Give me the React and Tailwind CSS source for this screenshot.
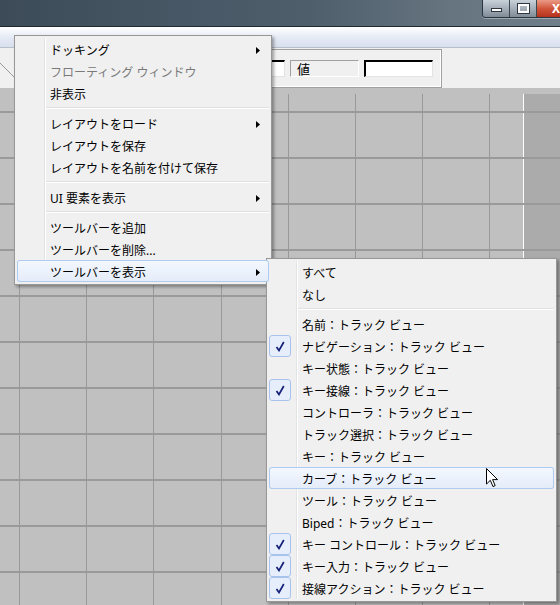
import clsx from 'clsx'

const mainMenu = [
  { label: 'ドッキング', arrow: true },
  { label: 'フローティング ウィンドウ', disabled: true },
  { label: '非表示' },
  'sep',
  { label: 'レイアウトをロード', arrow: true },
  { label: 'レイアウトを保存' },
  { label: 'レイアウトを名前を付けて保存' },
  'sep',
  { label: 'UI 要素を表示', arrow: true },
  'sep',
  { label: 'ツールバーを追加' },
  { label: 'ツールバーを削除...' },
  { label: 'ツールバーを表示', arrow: true, active: true },
]

const subMenu = [
  { label: 'すべて' },
  { label: 'なし' },
  'sep',
  { label: '名前：トラック ビュー' },
  { label: 'ナビゲーション：トラック ビュー', checked: true },
  { label: 'キー状態：トラック ビュー' },
  { label: 'キー接線：トラック ビュー', checked: true },
  { label: 'コントローラ：トラック ビュー' },
  { label: 'トラック選択：トラック ビュー' },
  { label: 'キー：トラック ビュー' },
  { label: 'カーブ：トラック ビュー', active: true },
  { label: 'ツール：トラック ビュー' },
  { label: 'Biped：トラック ビュー' },
  { label: 'キー コントロール：トラック ビュー', checked: true },
  { label: 'キー入力：トラック ビュー', checked: true },
  { label: '接線アクション：トラック ビュー', checked: true },
]

const vLines = [19, 86, 153, 221, 288, 355, 422, 489]
const hLines = [23, 69, 115, 161, 207, 253, 299, 345, 391, 437, 483]

function MenuItem({ item }) {
  if (item === 'sep') {
    return (
      <div className="flex h-[8px] items-center pl-[29px]">
        <div className="h-[2px] w-full border-t border-b border-t-[#e0e0e0] border-b-white" />
      </div>
    )
  }
  return (
    <div
      className={clsx(
        'relative flex h-[22px] items-center pl-[33px] pr-[9px] pt-[3px] whitespace-nowrap',
        item.disabled ? 'text-[#7a7a7a]' : 'text-black',
        item.active &&
          'z-10 rounded-[3px] bg-gradient-to-b from-[#f4f8fe] to-[#e4ecf9] shadow-[inset_0_0_0_1px_#afcbef]'
      )}
    >
      {item.checked && (
        <div className="absolute left-0 top-0 flex h-[22px] w-[22px] items-center justify-center rounded-[3px] border border-[#a9c4ec] bg-[#e6eefb]">
          <svg width="10" height="11" viewBox="0 0 10 11">
            <path d="M1.5 6 L4 9.5 L8.8 1" fill="none" stroke="#15207a" strokeWidth="1.7" />
          </svg>
        </div>
      )}
      <span>{item.label}</span>
      {item.arrow && (
        <svg className="ml-auto" width="4" height="7" viewBox="0 0 4 7">
          <path d="M0 0 L4 3.5 L0 7 Z" fill="#000" />
        </svg>
      )}
    </div>
  )
}

function Menu({ items, className }) {
  return (
    <div
      className={clsx(
        'absolute border border-[#979797] bg-[#f0f0f0] p-[2px] shadow-[2px_2px_3px_rgba(0,0,0,0.35)]',
        className
      )}
    >
      <div className="relative">
        <div className="absolute inset-y-0 left-[27px] w-px bg-[#e2e3e3]" />
        <div className="absolute inset-y-0 left-[28px] w-px bg-white" />
        {items.map((item, i) => (
          <MenuItem key={i} item={item} />
        ))}
      </div>
    </div>
  )
}

function WindowButtons() {
  return (
    <div className="flex h-[18px] overflow-hidden rounded-bl-[4px] border border-t-0 border-[#2b3640] shadow-[0_1px_0_rgba(255,255,255,0.35)]">
      <div className="flex w-[27px] items-center justify-center border-r border-[#3a4650] bg-gradient-to-b from-[#c9d1d9] via-[#a5afb9] to-[#7f8b96]">
        <div className="mt-[3px] h-[4px] w-[11px] border border-[#2e3740] bg-white" />
      </div>
      <div className="flex w-[27px] items-center justify-center border-r border-[#3a4650] bg-gradient-to-b from-[#c9d1d9] via-[#a5afb9] to-[#7f8b96]">
        <div className="h-[9px] w-[11px] border-[2px] border-white outline outline-1 outline-[#2e3740]" />
      </div>
      <div className="flex w-[24px] items-center justify-end bg-gradient-to-b from-[#e99a87] via-[#d2553a] to-[#b3321b] pr-[1px]">
        <span className="text-[12px] font-bold leading-none text-white">X</span>
      </div>
    </div>
  )
}

export default function App() {
  return (
    <div className="relative h-[605px] w-[560px] overflow-hidden bg-[#f0f0f0] font-['Noto_Sans','Noto_Sans_CJK_JP',sans-serif] text-[12px] leading-none">
      {/* title bar */}
      <div className="flex h-[26px] justify-end bg-[linear-gradient(90deg,#3c4b57_0%,#485866_35%,#4e5e6b_55%,#65747f_80%,#6f7e89_100%)]">
        <div className="mr-[-2px]">
          <WindowButtons />
        </div>
      </div>
      <div className="h-px bg-[#1f2a33]" />
      <div className="h-[20px] bg-gradient-to-b from-white via-[#e6ebf5] to-[#d8dfee]" />
      <div className="h-px bg-[#b7bfcb]" />

      {/* toolbar */}
      <div className="flex h-[40px] items-start">
        <svg width="16" height="40" className="shrink-0">
          <line x1="0" y1="15" x2="14" y2="29" stroke="#9a9a9a" strokeWidth="1" />
        </svg>
        <div className="mt-px flex h-[39px] w-[426px] items-center justify-end gap-[5px] border border-l-0 border-[#a0a0a0] pr-[8px] shadow-[inset_-1px_-1px_0_#fff]">
          <div className="h-[17px] w-[70px] border-t-2 border-l-2 border-t-black border-l-black border-r border-b border-r-[#e3e3e3] border-b-[#e3e3e3] bg-white" />
          <div className="flex h-[17px] w-[69px] items-center border border-t-[#a0a0a0] border-l-[#a0a0a0] border-r-white border-b-white pl-[6px] pt-[2px] text-[13px] text-black">
            値
          </div>
          <div className="h-[17px] w-[69px] border-t-2 border-l-2 border-t-black border-l-black border-r border-b border-r-[#e3e3e3] border-b-[#e3e3e3] bg-white" />
        </div>
      </div>

      {/* curve editor canvas */}
      <svg width="560" height="517" className="block">
        <rect width="560" height="517" fill="#c0c0c0" />
        <rect x="524" y="6" width="36" height="511" fill="#ababab" />
        {vLines.map((x) => (
          <rect key={x} x={x} y="6" width="1" height="511" fill="#999999" />
        ))}
        <rect x="523" y="6" width="1" height="511" fill="#ffffff" />
        {hLines.map((y) => (
          <rect key={y} x="0" y={y} width="560" height="2" fill="#9a9a9a" />
        ))}
      </svg>

      <Menu items={mainMenu} className="left-[14px] top-[35px] w-[258px]" />
      <Menu items={subMenu} className="left-[266px] top-[258px] w-[291px]" />

      {/* mouse pointer */}
      <svg className="absolute left-[486px] top-[468px] z-20" width="13" height="20" viewBox="0 0 13 20">
        <path
          d="M0.5 0.5 L0.5 16 L4.3 12.3 L7 18.6 L9.2 17.6 L6.6 11.6 L11.6 11.6 Z"
          fill="#fff"
          stroke="#000"
          strokeWidth="1"
          strokeLinejoin="round"
        />
      </svg>
    </div>
  )
}
